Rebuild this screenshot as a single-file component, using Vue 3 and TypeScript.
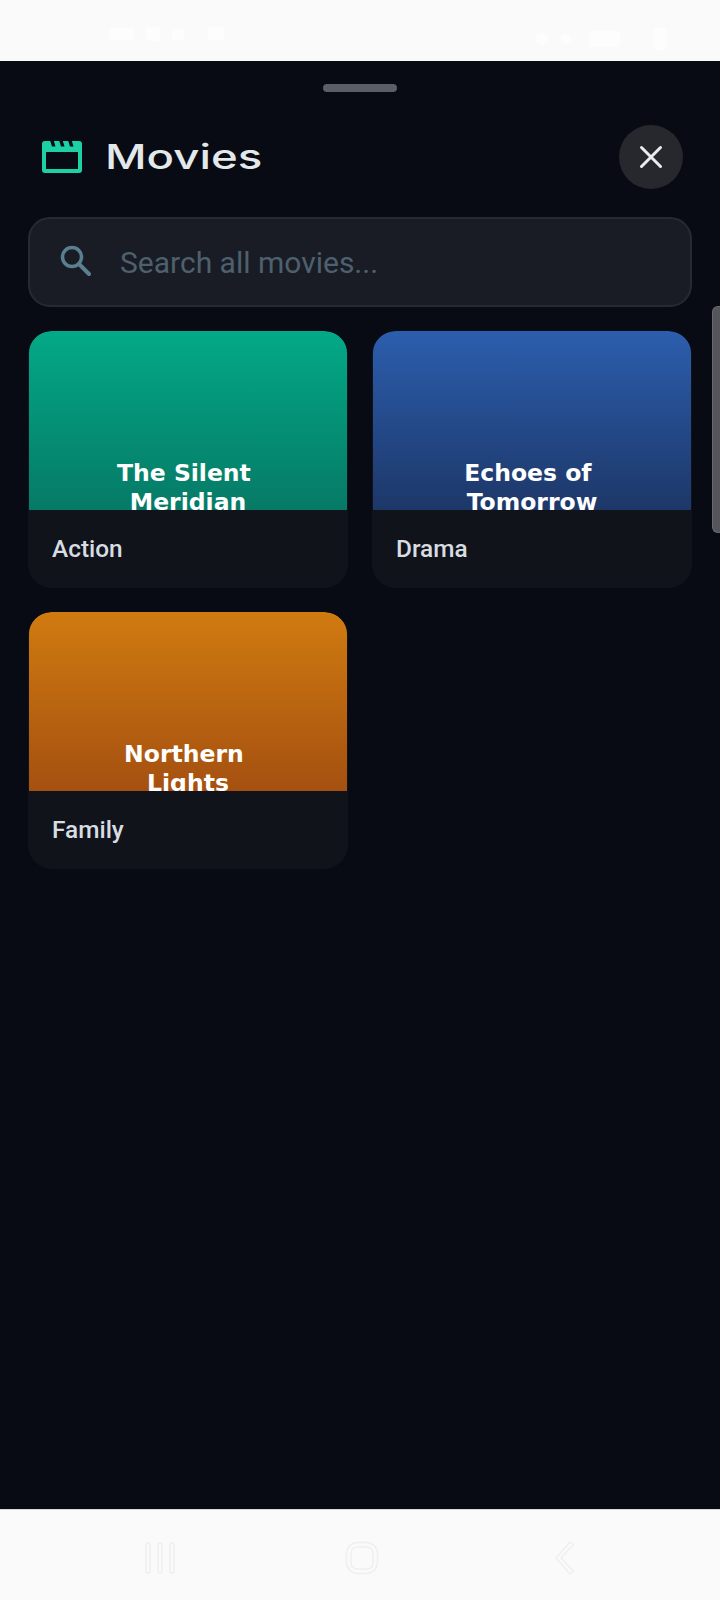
<template>
  <div class="screen">
    <div class="status-bar">
      <svg class="status-left" width="120" height="20" viewBox="0 0 120 20">
        <rect x="0" y="1" width="24" height="12" rx="3" />
        <rect x="36" y="0" width="14" height="14" rx="3" />
        <rect x="62" y="2" width="12" height="11" rx="3" />
        <rect x="98" y="0" width="16" height="13" rx="4" />
      </svg>
      <svg class="status-right" width="140" height="24" viewBox="0 0 140 24">
        <circle cx="12" cy="12" r="6" />
        <circle cx="36" cy="12" r="5" />
        <rect x="60" y="4" width="30" height="16" rx="3" />
        <rect x="124" y="1" width="12" height="22" rx="3" />
      </svg>
    </div>

    <div class="sheet">
      <div class="handle"></div>

      <div class="header">
        <div class="brand">
          <svg class="clapper" width="42" height="34" viewBox="0 0 42 34">
            <rect x="1" y="1" width="40" height="32" rx="3" fill="#1bd1a5" />
            <path d="M9 0h3.500l2 6.500H11zM18 0h3.500l2 6.500H20zM27 0h3.500l2 6.500H29z" fill="#080a14" />
            <rect x="5" y="12" width="32" height="17" fill="#080a14" />
          </svg>
          <h1 class="title">Movies</h1>
        </div>
        <button class="close-btn" aria-label="Close">
          <svg width="24" height="24" viewBox="0 0 24 24">
            <path d="M2.500 2.500l19 19M21.500 2.500l-19 19" stroke="#e9ebee" stroke-width="3" stroke-linecap="round" />
          </svg>
        </button>
      </div>

      <div class="search">
        <svg class="search-icon" width="31" height="31" viewBox="0 0 31 31">
          <circle cx="12" cy="12" r="9.500" fill="none" stroke="#5a7f8f" stroke-width="3.500" />
          <path d="M19 19l10 10" stroke="#5a7f8f" stroke-width="4" stroke-linecap="round" />
        </svg>
        <input class="search-input" type="text" v-model="query" placeholder="Search all movies..." />
      </div>

      <div class="grid">
        <div class="card" v-for="movie in filtered" :key="movie.genre">
          <div class="poster" :class="movie.tone">
            <span class="poster-title">{{ movie.title }}</span>
          </div>
          <div class="genre">{{ movie.genre }}</div>
        </div>
      </div>

      <div class="scroll-thumb"></div>
    </div>

    <div class="nav-bar">
      <svg width="34" height="34" viewBox="0 0 34 34" fill="none" stroke="#efefef" stroke-width="1.500">
        <rect x="2" y="2" width="4" height="30" rx="2" />
        <rect x="14" y="2" width="4" height="30" rx="2" />
        <rect x="26" y="2" width="4" height="30" rx="2" />
      </svg>
      <svg class="home" width="34" height="34" viewBox="0 0 34 34" fill="none" stroke="#efefef" stroke-width="1.500">
        <rect x="1.500" y="1.500" width="31" height="31" rx="11" />
        <rect x="6" y="6" width="22" height="22" rx="6" />
      </svg>
      <svg width="20" height="34" viewBox="0 0 20 34" fill="none" stroke="#efefef" stroke-width="1.500">
        <path d="M15 1l3.500 2.500L6 17l12.500 13.500L15 33 1 17z" stroke-linejoin="round" />
      </svg>
    </div>
  </div>
</template>

<script setup lang="ts">
import { computed, ref } from 'vue'

interface Movie {
  title: string
  genre: string
  tone: string
}

const movies: Movie[] = [
  { title: 'The Silent \nMeridian', genre: 'Action', tone: 'green' },
  { title: 'Echoes of \nTomorrow', genre: 'Drama', tone: 'blue' },
  { title: 'Northern \nLights', genre: 'Family', tone: 'orange' }
]

const query = ref('')

const filtered = computed(() =>
  movies.filter((m) => m.title.toLowerCase().includes(query.value.toLowerCase()))
)
</script>

<style>
html,
body {
  margin: 0;
  background: #080a14;
}
</style>

<style scoped>
.screen {
  width: 720px;
  height: 1600px;
  display: flex;
  flex-direction: column;
  overflow: hidden;
  font-family: Roboto, "Liberation Sans", sans-serif;
}

.status-bar {
  height: 61px;
  flex: none;
  box-sizing: border-box;
  padding: 27px 50px 0 110px;
  display: flex;
  justify-content: space-between;
  align-items: flex-start;
  background: #fafafa;
}

.status-left,
.status-right {
  fill: #fdfdfd;
}

.sheet {
  position: relative;
  flex: 1;
  box-sizing: border-box;
  padding: 0 28px;
  background: #080a14;
}

.handle {
  width: 74px;
  height: 8px;
  margin: 23px auto 32px;
  border-radius: 4px;
  background: #5b5d68;
}

.header {
  display: flex;
  justify-content: space-between;
  align-items: center;
  padding: 0 9px 0 13px;
}

.brand {
  display: flex;
  align-items: center;
  gap: 22px;
}

.clapper {
  display: block;
}

.title {
  margin: 0;
  font-family: Inter, "Liberation Sans", sans-serif;
  font-size: 34px;
  font-weight: 500;
  line-height: 40px;
  color: #e3e8ea;
  transform: scaleX(1.34);
  transform-origin: left center;
}

.close-btn {
  width: 64px;
  height: 64px;
  margin-top: 1px;
  padding: 0;
  border: none;
  border-radius: 50%;
  background: #26282d;
  display: flex;
  align-items: center;
  justify-content: center;
}

.search {
  height: 90px;
  box-sizing: border-box;
  margin-top: 28px;
  padding: 0 30px;
  display: flex;
  align-items: center;
  gap: 29px;
  background: #191c25;
  border: 2px solid #272a33;
  border-radius: 22px;
}

.search-icon {
  flex: none;
  margin-top: -3px;
}

.search-input {
  flex: 1;
  min-width: 0;
  padding: 0;
  border: none;
  outline: none;
  background: transparent;
  font-family: Roboto, "Liberation Sans", sans-serif;
  font-size: 30px;
  color: #e3e8ea;
}

.search-input::placeholder {
  color: #4e606d;
  opacity: 1;
}

.grid {
  margin-top: 24px;
  display: grid;
  grid-template-columns: 1fr 1fr;
  gap: 24px;
}

.card {
  height: 257px;
  display: flex;
  flex-direction: column;
  overflow: hidden;
  border-radius: 24px;
  background: #10131a;
}

.poster {
  height: 179px;
  box-sizing: border-box;
  margin: 0 1px;
  padding-top: 128px;
  overflow: hidden;
  border-radius: 22px 22px 0 0;
  text-align: center;
}

.poster-title {
  display: block;
  white-space: pre;
  font-family: "DejaVu Sans", sans-serif;
  font-size: 23.500px;
  font-weight: 700;
  line-height: 29px;
  color: #ffffff;
}

.green {
  background: linear-gradient(180deg, #03a987, #067a66);
}

.blue {
  background: linear-gradient(180deg, #2c5eae, #1d3768);
}

.orange {
  background: linear-gradient(180deg, #d07b10, #a55010);
}

.genre {
  padding: 22px 24px 0;
  font-size: 24.400px;
  font-weight: 500;
  line-height: 34px;
  color: #d7dde2;
}

.scroll-thumb {
  position: absolute;
  top: 245px;
  right: 0;
  width: 8px;
  height: 227px;
  box-sizing: border-box;
  border: 1px solid #6a6b70;
  border-right: none;
  border-radius: 6px 0 0 6px;
  background: #55565c;
}

.nav-bar {
  height: 91px;
  flex: none;
  box-sizing: border-box;
  border-top: 1px solid #d8d9de;
  padding: 5px 0 0 144px;
  display: flex;
  align-items: center;
  background: #fafafa;
}

.home {
  margin: 0 176px 0 167px;
}
</style>
